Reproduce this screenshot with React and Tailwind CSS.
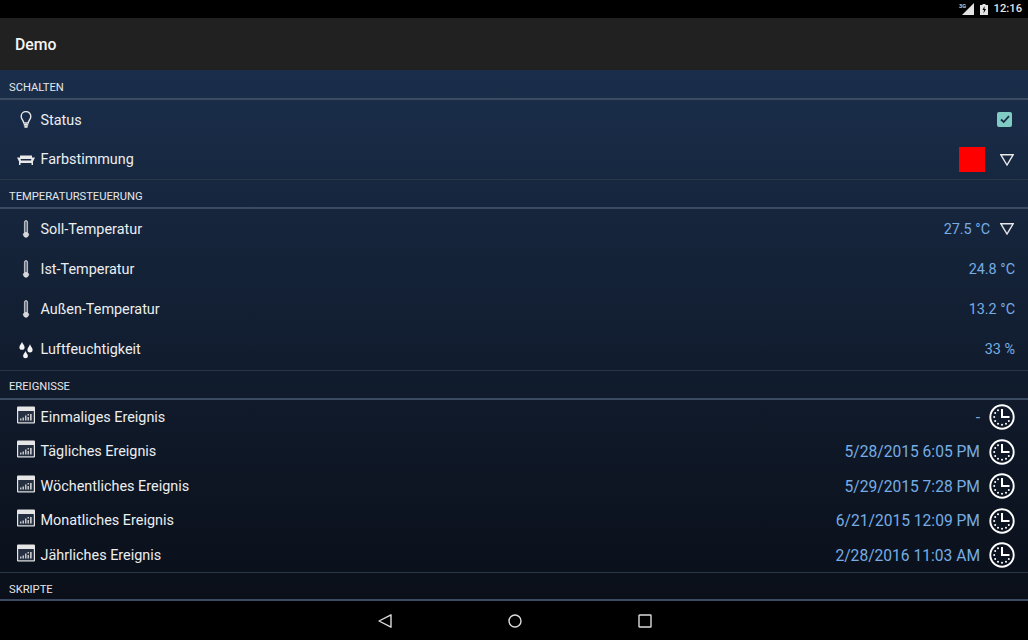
function Bulb() {
  return (
    <svg viewBox="0 0 16 18" className="h-[18px] w-4" fill="none" stroke="#e8e8e8" strokeWidth="1.400">
      <path d="M5.800 12C5.600 9.800 3.200 8.200 3.200 5.400a4.800 4.800 0 0 1 9.600 0c0 2.800-2.400 4.400-2.600 6.600z" />
      <path d="M5.800 13.800h4.400M6.400 15.800h3.200" strokeWidth="1.700" />
    </svg>
  );
}

function Sofa() {
  return (
    <svg viewBox="0 0 18 10" className="h-2.5 w-[18px]" fill="#e8e8e8">
      <path d="M3 .5h12v3.500H3z" />
      <path d="M0 2.500h3.200l.8 3h10l.8-3H18l-2 4V10h-1.500V8h-11v2H2V6.500z" />
    </svg>
  );
}

function Thermo() {
  return (
    <svg viewBox="0 0 8 18" className="h-[18px] w-2">
      <path d="M2.400 2a1.600 1.600 0 0 1 3.200 0v10.600a2.600 2.600 0 1 1-3.200 0z" fill="#d4d6da" stroke="#efefef" strokeWidth=".5" />
      <rect x="3.200" y="1.500" width="1.600" height="10.500" fill="#566072" />
    </svg>
  );
}

function Drops() {
  return (
    <svg viewBox="0 0 14 18" className="h-[18px] w-3.5" fill="#f4f4f4">
      <path d="M3 1c.9 2.400 2.600 3.500 2.600 5.200a2.600 2.600 0 0 1-5.200 0C.4 4.500 2.100 3.400 3 1z" />
      <path d="M11 3.200c.9 2.600 2.600 3.700 2.600 5.600a2.600 2.600 0 0 1-5.200 0c0-1.900 1.700-3 2.600-5.600z" />
      <path d="M6.500 10c.9 2.400 2.400 3.400 2.400 4.900a2.400 2.400 0 0 1-4.800 0c0-1.500 1.500-2.500 2.400-4.900z" />
    </svg>
  );
}

function Calendar() {
  return (
    <svg viewBox="0 0 18 18" className="mb-[5px] h-[18px] w-[18px]">
      <rect x="0" y=".5" width="18" height="17" rx="1" fill="#e6e6e6" />
      <rect x="1.200" y="5" width="15.600" height="11.300" fill="#263040" />
      <path d="M3 12.500h1.500v2H3zM5.500 11.500H7v3H5.500zM8 9.500h1.500v5H8zM10.500 8H12v1.500h-1.500zM10.500 11H12v3.500h-1.500zM13 8h1.700v6.500H13z" fill="#c4c6ca" />
    </svg>
  );
}

function Clock() {
  return (
    <svg viewBox="0 0 26 26" className="h-[26px] w-[26px]" fill="none" stroke="#fff">
      <circle cx="13" cy="13" r="11.700" strokeWidth="1.900" />
      <path d="M13 5v8h7.500" strokeWidth="2" />
      <g fill="#fff" stroke="none">
        <circle cx="9" cy="6.200" r="1" />
        <circle cx="6.200" cy="9" r="1" />
        <circle cx="5.200" cy="13" r="1" />
        <circle cx="6.200" cy="17" r="1" />
        <circle cx="9" cy="19.800" r="1" />
        <circle cx="13" cy="20.800" r="1" />
        <circle cx="17" cy="19.800" r="1" />
        <circle cx="19.800" cy="17" r="1" />
      </g>
    </svg>
  );
}

function Caret() {
  return (
    <svg viewBox="0 0 14 12" className="h-3 w-3.5" fill="none" stroke="#e8e8e8" strokeWidth="1.400">
      <path d="M.9.800h12.200L7 11z" />
    </svg>
  );
}

function Check() {
  return (
    <span className="mb-[2px] mr-[3px] flex h-[15px] w-[15px] items-center justify-center rounded-[2px] bg-[#80cbc4]">
      <svg viewBox="0 0 12 12" className="h-3 w-3" fill="none" stroke="#1b2d45" strokeWidth="1.800">
        <path d="M2 6.500l2.700 2.500L10 3.200" />
      </svg>
    </span>
  );
}

function Header({ children, h }) {
  return (
    <div className={`flex items-center border-b-2 border-[#3a4b62] pl-[9px] text-[11.2px] leading-4 text-[#e4e6e9] ${h}`}>
      {children}
    </div>
  );
}

function Row({ icon, label, h, last, children }) {
  return (
    <div className={`flex items-center pr-[13px] ${h} ${last ? 'border-b border-[#2a3545]' : ''}`}>
      <span className="flex w-[40.5px] shrink-0 items-center justify-center pl-[17px] pr-[5.5px]">{icon}</span>
      <span className="flex-1 pt-px text-[14.4px] leading-[22px] text-[#eceef0]">{label}</span>
      {children}
    </div>
  );
}

function Value({ children }) {
  return <span className="pt-px text-[14.4px] leading-[22px] text-[#76ade4]">{children}</span>;
}

const temps = [
  { label: 'Ist-Temperatur', value: '24.8 °C', icon: <Thermo />, h: 'h-10' },
  { label: 'Außen-Temperatur', value: '13.2 °C', icon: <Thermo />, h: 'h-10' },
  { label: 'Luftfeuchtigkeit', value: '33 %', icon: <Drops />, h: 'h-[42px]', last: true },
];

const events = [
  { label: 'Einmaliges Ereignis', value: '-', h: 'h-[34px]' },
  { label: 'Tägliches Ereignis', value: '5/28/2015 6:05 PM', h: 'h-[35px]' },
  { label: 'Wöchentliches Ereignis', value: '5/29/2015 7:28 PM', h: 'h-[34px]' },
  { label: 'Monatliches Ereignis', value: '6/21/2015 12:09 PM', h: 'h-[35px]' },
  { label: 'Jährliches Ereignis', value: '2/28/2016 11:03 AM', h: 'h-[35px]', last: true },
];

export default function App() {
  return (
    <div className="flex h-[640px] w-[1028px] flex-col overflow-hidden bg-black font-['Roboto',sans-serif]">
      {/* status bar */}
      <div className="flex h-[18px] shrink-0 items-center justify-end gap-[6px] pr-[6px] text-[11.2px] font-medium text-[#e4e4e4]">
        <svg viewBox="0 0 15 12" className="h-3 w-[15px]">
          <path d="M15 0v12H3z" fill="#e4e4e4" />
          <text x="0" y="5" fontSize="5.500" fill="#e4e4e4">3G</text>
        </svg>
        <svg viewBox="0 0 8 11" className="h-[11px] w-2">
          <path d="M2.500 0h3v1H8v10H0V1h2.500z" fill="#e4e4e4" />
          <path d="M4.500 2L2.500 6h1.500L3.500 9.500 6 5H4.500z" fill="#000" />
        </svg>
        <span>12:16</span>
      </div>

      {/* action bar */}
      <div className="flex h-[52px] shrink-0 items-center bg-[#212121] pl-[15px] pt-px text-[15.8px] font-medium text-[#f5f5f5]">
        Demo
      </div>

      {/* list */}
      <div className="h-[531px] shrink-0 overflow-hidden bg-gradient-to-b from-[#1a2e4b] to-[#0a0f19]">
        <Header h="h-[30px] pt-[8px]">SCHALTEN</Header>
        <Row icon={<Bulb />} label="Status" h="h-10">
          <Check />
        </Row>
        <Row icon={<Sofa />} label="Farbstimmung" h="h-10" last>
          <span className="h-[25px] w-[26px] bg-[#ff0000]" />
          <span className="ml-[15px] mr-px"><Caret /></span>
        </Row>

        <Header h="h-[29px] pt-[7px]">TEMPERATURSTEUERUNG</Header>
        <Row icon={<Thermo />} label="Soll-Temperatur" h="h-10">
          <Value>27.5 °C</Value>
          <span className="ml-[10px] mr-px"><Caret /></span>
        </Row>
        {temps.map((t) => (
          <Row key={t.label} icon={t.icon} label={t.label} h={t.h} last={t.last}>
            <Value>{t.value}</Value>
          </Row>
        ))}

        <Header h="h-[29px] pt-[5px]">EREIGNISSE</Header>
        {events.map((e) => (
          <Row key={e.label} icon={<Calendar />} label={e.label} h={e.h} last={e.last}>
            <span className="pt-px text-[15.6px] leading-[22px] text-[#76ade4]">{e.value}</span>
            <span className="ml-[9px]"><Clock /></span>
          </Row>
        ))}

        <Header h="h-[28px] pt-[7px]">SKRIPTE</Header>
      </div>

      {/* nav bar */}
      <div className="flex flex-1 items-center justify-center gap-[116px] pl-[2px]">
        <svg viewBox="0 0 14 14" className="h-3.5 w-3.5" fill="none" stroke="#dcdcdc" strokeWidth="1.400">
          <path d="M13 .8v12.400L1 7z" strokeLinejoin="round" />
        </svg>
        <svg viewBox="0 0 14 14" className="h-3.5 w-3.5" fill="none" stroke="#dcdcdc" strokeWidth="1.400">
          <circle cx="7" cy="7" r="6" />
        </svg>
        <svg viewBox="0 0 14 14" className="h-3.5 w-3.5" fill="none" stroke="#dcdcdc" strokeWidth="1.400">
          <rect x="1" y="1" width="12" height="12" rx=".5" />
        </svg>
      </div>
    </div>
  );
}
